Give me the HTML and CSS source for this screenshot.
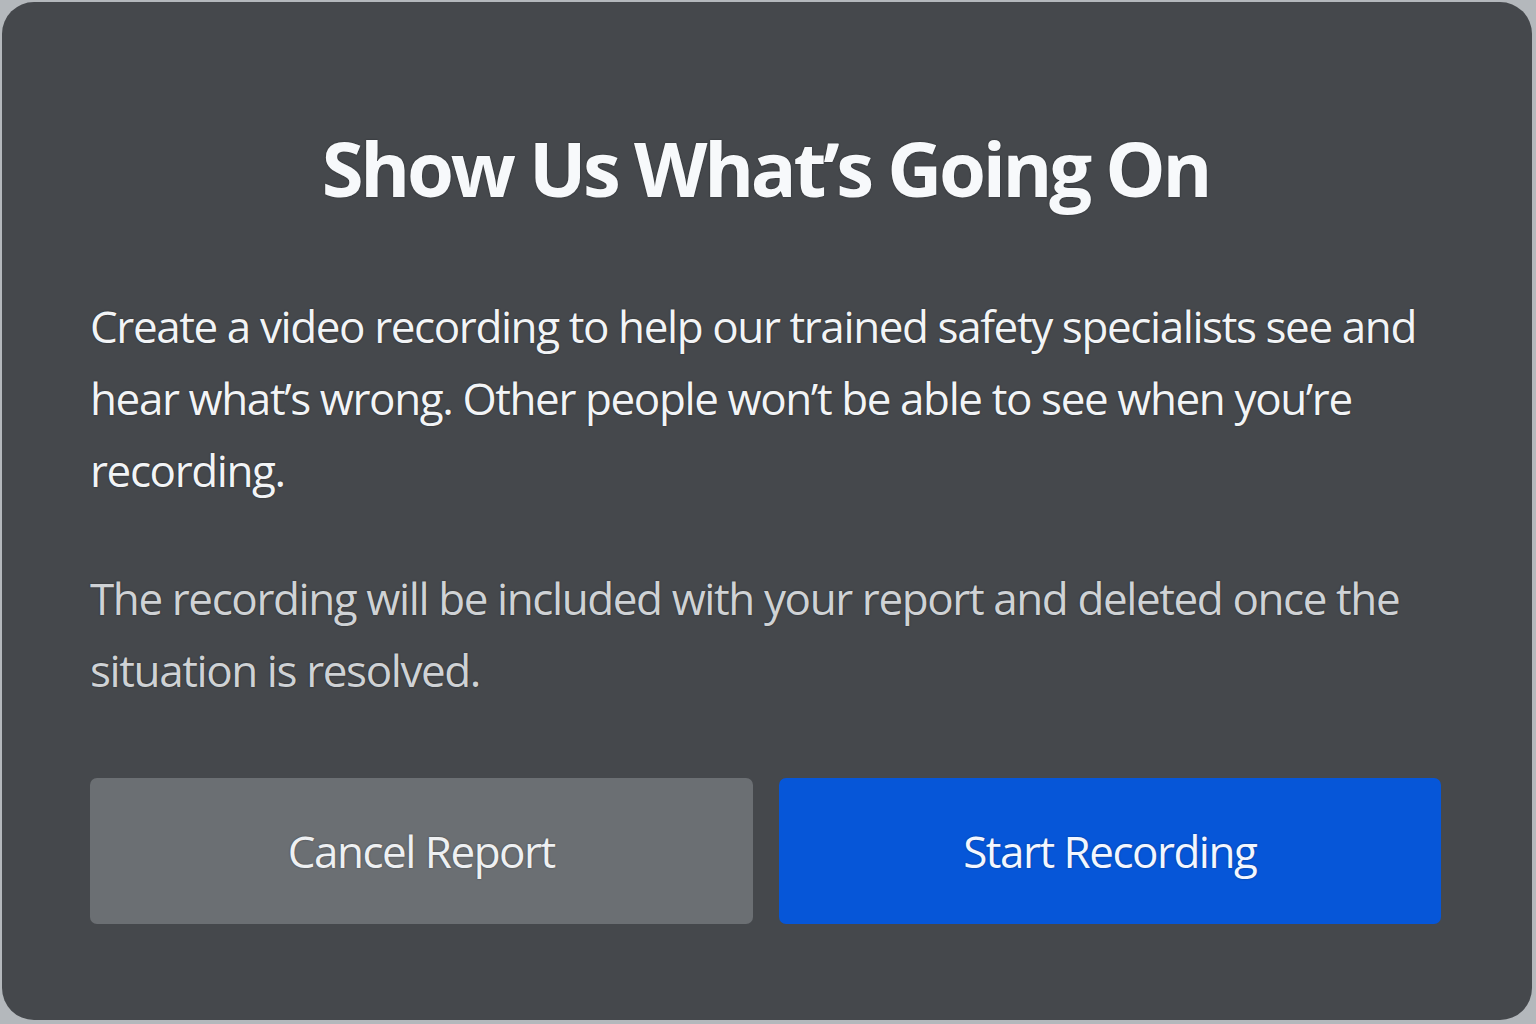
FILE: index.html
```html
<!DOCTYPE html>
<html lang="en">
<head>
	<meta charset="UTF-8">
	<meta name="viewport" content="width=device-width, initial-scale=1.0">
	<title>Show Us What's Going On</title>
	<link rel="stylesheet" href="styles.css">
</head>
<body>
	<div class="dialog">
		<h1 class="title">Show Us What’s Going On</h1>
		<p class="lead">Create a video recording to help our trained safety specialists see and hear what’s wrong. Other people won’t be able to see when you’re recording.</p>
		<p class="note">The recording will be included with your report and deleted once the situation is resolved.</p>
		<div class="actions">
			<button class="btn cancel">Cancel Report</button>
			<button class="btn start">Start Recording</button>
		</div>
	</div>
</body>
</html>
```

FILE: styles.css
```css
html, body {
    margin: 0;
    height: 100%;
}

body {
    background-color: #b4b8bc;
    font-family: "Open Sans", "Noto Sans", sans-serif;
    overflow: hidden;
}

div.dialog {
    box-sizing: border-box;
    margin: 2px 4px 0 2px;
    height: 1018px;
    padding: 106px 91px 0 88px;
    background-color: #45484c;
    border-radius: 32px;
}

h1.title {
    margin: 0;
    line-height: 120px;
    font-size: 76px;
    font-weight: 700;
    letter-spacing: -3.3px;
    text-align: center;
    color: #f7f9fb;
    text-shadow: 0 0 2px rgba(0, 0, 0, .45);
}

div.dialog p {
    margin: 0;
    font-size: 44px;
    line-height: 72px;
    letter-spacing: -1.4px;
    text-shadow: 0 0 2px rgba(0, 0, 0, .45);
}

p.lead {
    margin-top: 62px !important;
    color: #f2f4f6;
}

p.note {
    margin-top: 56px !important;
    color: #cfd2d5;
}

div.actions {
    display: flex;
    gap: 26px;
    margin-top: 72px;
}

button.btn {
    flex: 1;
    height: 146px;
    border: none;
    border-radius: 7px;
    font-family: inherit;
    font-size: 44px;
    letter-spacing: -1.5px;
    color: #eef0f2;
    text-shadow: 0 0 2px rgba(0, 0, 0, .4);
}

button.cancel {
    background-color: #6b6f73;
}

button.start {
    background-color: #0656d8;
    color: #f2f6ff;
}
```
